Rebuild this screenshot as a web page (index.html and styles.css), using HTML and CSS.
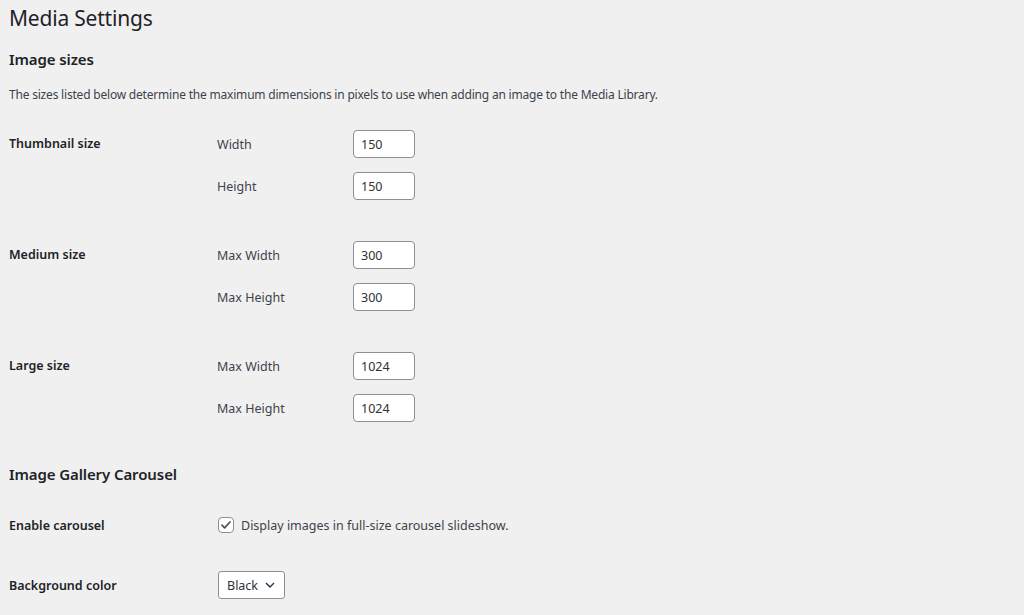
FILE: index.html
```html
<!DOCTYPE html>
<html lang="en">
<head>
  <meta charset="UTF-8" />
  <title>Media Settings</title>
  <link rel="stylesheet" href="styles.css">
</head>
<body>
  <div class="wrap">
    <h1>Media Settings</h1>

    <h2 class="title">Image sizes</h2>
    <p class="intro">The sizes listed below determine the maximum dimensions in pixels to use when adding an image to the Media Library.</p>

    <!-- thumbnail / medium / large -->
    <div class="size-group">
      <div class="row-label">Thumbnail size</div>
      <div class="field">
        <label for="thumb-w">Width</label>
        <input type="text" id="thumb-w" value="150" />
      </div>
      <div class="field">
        <label for="thumb-h">Height</label>
        <input type="text" id="thumb-h" value="150" />
      </div>
    </div>

    <div class="size-group">
      <div class="row-label">Medium size</div>
      <div class="field">
        <label for="med-w">Max Width</label>
        <input type="text" id="med-w" value="300" />
      </div>
      <div class="field">
        <label for="med-h">Max Height</label>
        <input type="text" id="med-h" value="300" />
      </div>
    </div>

    <div class="size-group">
      <div class="row-label">Large size</div>
      <div class="field">
        <label for="large-w">Max Width</label>
        <input type="text" id="large-w" value="1024" />
      </div>
      <div class="field">
        <label for="large-h">Max Height</label>
        <input type="text" id="large-h" value="1024" />
      </div>
    </div>

    <h2 class="title carousel-title">Image Gallery Carousel</h2>

    <div class="option-row">
      <div class="row-label">Enable carousel</div>
      <label class="check">
        <span class="box">
          <svg width="14" height="14" viewBox="0 0 14 14"><path d="M3 7.2l2.6 2.6L11 4" fill="none" stroke="#50575e" stroke-width="1.8" stroke-linecap="round" stroke-linejoin="round"/></svg>
        </span>
        Display images in full-size carousel slideshow.
      </label>
    </div>

    <div class="option-row select-row">
      <div class="row-label">Background color</div>
      <div class="select">
        <span>Black</span>
        <svg width="10" height="6" viewBox="0 0 10 6"><path d="M1 1l4 4 4-4" fill="none" stroke="#2c3338" stroke-width="1.4"/></svg>
      </div>
    </div>
  </div>
</body>
</html>
```

FILE: styles.css
```css
body {
  margin: 0;
  padding: 0;
  background-color: #f0f0f1;
  color: #1d2327;
  font-family: 'Noto Sans', sans-serif;
  font-size: 12.5px;
}

.wrap {
  padding: 4px 0 0 9px;
}

h1 {
  margin: 0;
  font-size: 21px;
  font-weight: 400;
  line-height: 29px;
  letter-spacing: -0.2px;
}

.title {
  margin: 15px 0 0;
  font-size: 15px;
  font-weight: 600;
  line-height: 22px;
  letter-spacing: -0.1px;
}

.intro {
  margin: 16px 0 26px;
  font-size: 12px;
  line-height: 18px;
  letter-spacing: -0.2px;
  color: #3c434a;
}

.size-group {
  display: grid;
  grid-template-columns: 208px 136px auto;
  grid-auto-rows: 28px;
  row-gap: 14px;
  align-items: center;
  margin-bottom: 41px;
}

.size-group .row-label {
  grid-row: 1;
  margin-top: -2px;
}

.field {
  display: contents;
}

.field label {
  grid-column: 2;
  color: #3c434a;
}

.field input {
  grid-column: 3;
  width: 62px;
  height: 28px;
  box-sizing: border-box;
  padding: 0 7px;
  border: 1px solid #8c8f94;
  border-radius: 4px;
  background-color: #fff;
  font-family: inherit;
  font-size: 12.5px;
  color: #2c3338;
}

.row-label {
  font-weight: 600;
}

.carousel-title {
  margin-top: 3px;
}

.option-row {
  display: grid;
  grid-template-columns: 209px auto;
  height: 28px;
  align-items: center;
  margin-top: 26px;
}

.select-row {
  margin-top: 32px;
}

.check {
  display: flex;
  align-items: center;
  gap: 7px;
  color: #3c434a;
}

.box {
  display: flex;
  align-items: center;
  justify-content: center;
  width: 14px;
  height: 14px;
  border: 1px solid #8c8f94;
  border-radius: 4px;
  background-color: #fff;
}

.select {
  display: flex;
  align-items: center;
  justify-content: space-between;
  width: 67px;
  height: 28px;
  box-sizing: border-box;
  padding: 0 9px 0 8px;
  border: 1px solid #8c8f94;
  border-radius: 3px;
  background-color: #fff;
  color: #2c3338;
}
```
